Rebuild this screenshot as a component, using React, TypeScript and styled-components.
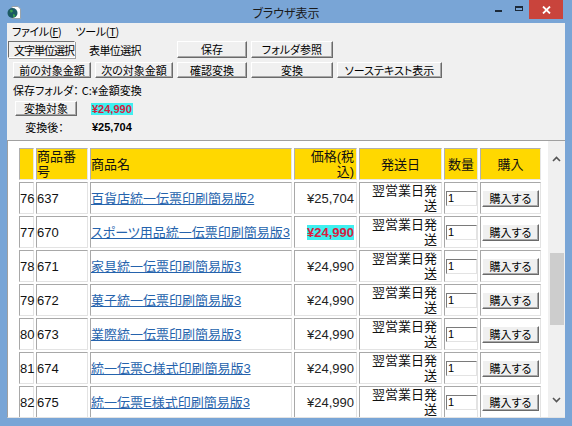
import React from "react";
import styled, { createGlobalStyle } from "styled-components";

const GlobalStyle = createGlobalStyle`
  html, body { margin: 0; padding: 0; background: #fff; }
  body { font-family: "Noto Sans CJK JP", sans-serif; }
`;

const FRAME = "#79a5d6";

const Window = styled.div`
  width: 572px;
  height: 426px;
  box-sizing: border-box;
  background: ${FRAME};
  display: flex;
  flex-direction: column;
  padding: 0 7px 8px;
  overflow: hidden;
`;

const TitleBar = styled.div`
  height: 23px;
  flex: 0 0 auto;
  display: grid;
  grid-template-columns: 1fr auto 1fr;
  align-items: start;
`;

const AppIcon = styled.svg`
  margin-top: 6px;
`;

const TitleText = styled.div`
  padding-top: 5px;
  font-size: 12px;
  line-height: 16px;
  color: #1a1a1a;
  font-feature-settings: "palt";
`;

const Controls = styled.div`
  justify-self: end;
  display: flex;
  margin-right: 2px;
`;

const CaptionButton = styled.div<{ $w: number; $close?: boolean }>`
  width: ${(p) => p.$w}px;
  height: 19px;
  display: flex;
  align-items: center;
  justify-content: center;
  background: ${(p) => (p.$close ? "#c9443c" : "transparent")};
`;

const MinGlyph = styled.span`
  width: 7px;
  height: 2px;
  margin-top: 3px;
  background: #1c2a3a;
`;

const MaxGlyph = styled.span`
  width: 8px;
  height: 5px;
  box-sizing: border-box;
  border: 1px solid #1c2a3a;
  border-top-width: 2px;
  margin-top: -2px;
`;

const Client = styled.div`
  flex: 1;
  min-height: 0;
  background: #f0f0f0;
  display: flex;
  flex-direction: column;
  font-size: 11px;
  color: #000;
  font-feature-settings: "palt";
  white-space: nowrap;
`;

const MenuBar = styled.div`
  height: 17px;
  display: flex;
  align-items: center;
  gap: 14px;
  padding-left: 5px;
  line-height: 15px;
`;

const MenuItem = styled.span`
  letter-spacing: -0.3px;
`;

const Row = styled.div<{ $mt?: number; $pl?: number; $h: number }>`
  display: flex;
  align-items: center;
  height: ${(p) => p.$h}px;
  margin-top: ${(p) => p.$mt ?? 0}px;
  padding-left: ${(p) => p.$pl ?? 0}px;
  gap: 4px;
`;

const TabActive = styled.div`
  margin-left: 1px;
  width: 67px;
  height: 17px;
  box-sizing: border-box;
  padding-left: 5px;
  display: flex;
  align-items: center;
  letter-spacing: -1px;
  border: 1px solid;
  border-color: #6e6e6e #ffffff #ffffff #6e6e6e;
  box-shadow: 1px 1px 0 #a0a0a0;
`;

const TabLabel = styled.div`
  width: 94px;
  padding-left: 10px;
  box-sizing: border-box;
  letter-spacing: -0.6px;
`;

const Button = styled.button<{ $w: number; $h?: number }>`
  width: ${(p) => p.$w}px;
  height: ${(p) => p.$h ?? 17}px;
  box-sizing: border-box;
  padding: 0;
  margin: 0;
  background: #f0f0f0;
  border: 1px solid;
  border-color: #ffffff #6a6a6a #6a6a6a #ffffff;
  box-shadow: inset -1px -1px 0 #a8a8a8;
  font-family: "Noto Sans CJK JP", sans-serif;
  font-size: 11px;
  font-feature-settings: "palt";
  line-height: 13px;
  color: #000;
  text-align: center;
  white-space: nowrap;
`;

const FolderLabel = styled.div`
  margin-top: 5px;
  padding-left: 6px;
  height: 14px;
  line-height: 14px;
`;

const Colon = styled.span`
  margin-right: 3px;
`;

const ValueRow = styled.div<{ $mt: number; $h: number }>`
  display: flex;
  align-items: center;
  gap: 14px;
  padding-left: 8px;
  margin-top: ${(p) => p.$mt}px;
  height: ${(p) => p.$h}px;
`;

const CaptionCell = styled.div`
  width: 62px;
  text-align: center;
`;

const Amount = styled.span<{ $hl?: boolean }>`
  font-family: "Liberation Sans", sans-serif;
  font-weight: bold;
  font-size: 11px;
  line-height: 12px;
  padding: 0 1px;
  color: ${(p) => (p.$hl ? "#d8203f" : "#000")};
  background: ${(p) => (p.$hl ? "#3ff0f0" : "transparent")};
`;

const Panel = styled.div`
  margin-top: 6px;
  flex: 1;
  min-height: 0;
  display: flex;
  background: #fff;
  border-top: 1px solid #a0a0a0;
  border-left: 1px solid #a0a0a0;
  border-bottom: 1px solid #e3e3e3;
`;

const PageView = styled.div`
  flex: 1;
  min-width: 0;
  overflow: hidden;
  padding: 5px 0 0 9px;
`;

const ScrollBar = styled.div`
  width: 17px;
  flex: 0 0 auto;
  background: #f0f0f0;
  display: flex;
  flex-direction: column;
`;

const ArrowBox = styled.div<{ $h: number }>`
  height: ${(p) => p.$h}px;
  flex: 0 0 auto;
  display: flex;
  align-items: center;
  justify-content: center;
`;

const Track = styled.div`
  flex: 1;
  display: flex;
  flex-direction: column;
  padding: 0 1px 0 2px;
`;

const Thumb = styled.div<{ $top: number; $h: number }>`
  margin-top: ${(p) => p.$top}px;
  height: ${(p) => p.$h}px;
  background: #cdcdcd;
`;

const Table = styled.table`
  table-layout: fixed;
  width: 526px;
  border-collapse: separate;
  border-spacing: 2px;
  font-family: "Liberation Sans", "Noto Sans CJK JP", sans-serif;
  font-size: 13px;
  line-height: 15px;
  color: #111;
  font-feature-settings: "palt";
`;

const Th = styled.th<{ $w: number; $align?: string; $pr?: number }>`
  width: ${(p) => p.$w}px;
  height: 32px;
  box-sizing: border-box;
  padding: 0 ${(p) => p.$pr ?? 0}px 0 0;
  background: #ffd800;
  border: 1px solid;
  border-color: #b0b0b0 #e6e6e6 #e6e6e6 #b0b0b0;
  font-weight: normal;
  text-align: ${(p) => p.$align ?? "left"};
  vertical-align: middle;
`;

const Td = styled.td<{ $align?: string; $pr?: number }>`
  height: 32px;
  box-sizing: border-box;
  padding: 0 ${(p) => p.$pr ?? 0}px 0 0;
  background: #fff;
  border: 1px solid;
  border-color: #a8a8a8 #e3e3e3 #e3e3e3 #a8a8a8;
  text-align: ${(p) => p.$align ?? "left"};
  vertical-align: middle;
  white-space: nowrap;
`;

const ItemLink = styled.a`
  color: #2563ad;
  text-decoration: underline;
  cursor: pointer;
`;

const Price = styled.span<{ $hl?: boolean }>`
  font-weight: ${(p) => (p.$hl ? "bold" : "normal")};
  color: ${(p) => (p.$hl ? "#d8203f" : "#222")};
  background: ${(p) => (p.$hl ? "#3ff0f0" : "transparent")};
`;

const QtyInput = styled.input`
  display: block;
  width: 31px;
  height: 15px;
  box-sizing: border-box;
  margin: 0 0 0 1px;
  padding: 0 1px;
  border: 1px solid;
  border-color: #7a7a7a #e3e3e3 #e3e3e3 #7a7a7a;
  font-family: "Liberation Sans", sans-serif;
  font-size: 11px;
  line-height: 13px;
  background: #fff;
`;

const BuyCell = styled.div`
  display: flex;
  justify-content: center;
`;

type Item = { no: number; code: string; name: string; price: string; hl?: boolean };

const items: Item[] = [
  { no: 76, code: "637", name: "百貨店統一伝票印刷簡易版2", price: "¥25,704" },
  { no: 77, code: "670", name: "スポーツ用品統一伝票印刷簡易版3", price: "¥24,990", hl: true },
  { no: 78, code: "671", name: "家具統一伝票印刷簡易版3", price: "¥24,990" },
  { no: 79, code: "672", name: "菓子統一伝票印刷簡易版3", price: "¥24,990" },
  { no: 80, code: "673", name: "業際統一伝票印刷簡易版3", price: "¥24,990" },
  { no: 81, code: "674", name: "統一伝票C様式印刷簡易版3", price: "¥24,990" },
  { no: 82, code: "675", name: "統一伝票E様式印刷簡易版3", price: "¥24,990" },
];

const Chevron = ({ up }: { up?: boolean }) => (
  <svg width="9" height="6" viewBox="0 0 9 6">
    <path
      d={up ? "M1 5 L4.5 1.5 L8 5" : "M1 1 L4.5 4.5 L8 1"}
      fill="none"
      stroke="#555"
      strokeWidth="1.6"
    />
  </svg>
);

export default function App() {
  return (
    <>
      <GlobalStyle />
      <Window>
        <TitleBar>
          <AppIcon width="14" height="13" viewBox="0 0 14 13">
            <path d="M5 0.5 H11 L13.5 3 V12.5 H5 Z" fill="#fff" stroke="#9aa4ad" />
            <circle cx="5.5" cy="7" r="5" fill="#1c5a63" />
            <path d="M3 4 Q5 3 6 5 Q5 7 3.5 6.5 Z M6 8 Q8 8 8.5 10 Q7 11.5 6 10.5 Z" fill="#3fa34d" />
          </AppIcon>
          <TitleText>ブラウザ表示</TitleText>
          <Controls>
            <CaptionButton $w={22}>
              <MinGlyph />
            </CaptionButton>
            <CaptionButton $w={20}>
              <MaxGlyph />
            </CaptionButton>
            <CaptionButton $w={34} $close>
              <svg width="9" height="8" viewBox="0 0 9 8">
                <path d="M1 0.5 L8 7.5 M8 0.5 L1 7.5" stroke="#fff" strokeWidth="1.8" />
              </svg>
            </CaptionButton>
          </Controls>
        </TitleBar>

        <Client>
          <MenuBar>
            <MenuItem>
              ファイル(<u>F</u>)
            </MenuItem>
            <MenuItem>
              ツール(<u>T</u>)
            </MenuItem>
          </MenuBar>

          <Row $h={19}>
            <TabActive>文字単位選択</TabActive>
            <TabLabel>表単位選択</TabLabel>
            <Button $w={70}>保存</Button>
            <Button $w={82}>フォルダ参照</Button>
          </Row>

          <Row $h={16} $mt={3} $pl={6}>
            <Button $w={78} $h={16}>前の対象金額</Button>
            <Button $w={78} $h={16}>次の対象金額</Button>
            <Button $w={70} $h={16}>確認変換</Button>
            <Button $w={82} $h={16}>変換</Button>
            <Button $w={105} $h={16}>ソーステキスト表示</Button>
          </Row>

          <FolderLabel>
            保存フォルダ<Colon>：</Colon>C:¥金額変換
          </FolderLabel>

          <ValueRow $mt={4} $h={15}>
            <Button $w={62} $h={15}>変換対象</Button>
            <Amount $hl>¥24,990</Amount>
          </ValueRow>

          <ValueRow $mt={4} $h={14}>
            <CaptionCell>
              変換後<Colon>：</Colon>
            </CaptionCell>
            <Amount>¥25,704</Amount>
          </ValueRow>

          <Panel>
            <PageView>
              <Table>
                <thead>
                  <tr>
                    <Th $w={15} />
                    <Th $w={52}>
                      商品番
                      <br />号
                    </Th>
                    <Th $w={202}>商品名</Th>
                    <Th $w={63} $align="right" $pr={2}>
                      価格(税
                      <br />込)
                    </Th>
                    <Th $w={83} $align="center">発送日</Th>
                    <Th $w={34} $align="center">数量</Th>
                    <Th $w={61} $align="center">購入</Th>
                  </tr>
                </thead>
                <tbody>
                  {items.map((it) => (
                    <tr key={it.no}>
                      <Td>{it.no}</Td>
                      <Td>{it.code}</Td>
                      <Td>
                        <ItemLink>{it.name}</ItemLink>
                      </Td>
                      <Td $align="right" $pr={2}>
                        <Price $hl={it.hl}>{it.price}</Price>
                      </Td>
                      <Td $align="right" $pr={4}>
                        翌営業日発
                        <br />送
                      </Td>
                      <Td>
                        <QtyInput defaultValue="1" />
                      </Td>
                      <Td>
                        <BuyCell>
                          <Button $w={57} $h={17}>購入する</Button>
                        </BuyCell>
                      </Td>
                    </tr>
                  ))}
                </tbody>
              </Table>
            </PageView>
            <ScrollBar>
              <ArrowBox $h={36}>
                <Chevron up />
              </ArrowBox>
              <Track>
                <Thumb $top={76} $h={72} />
              </Track>
              <ArrowBox $h={34}>
                <Chevron />
              </ArrowBox>
            </ScrollBar>
          </Panel>
        </Client>
      </Window>
    </>
  );
}
